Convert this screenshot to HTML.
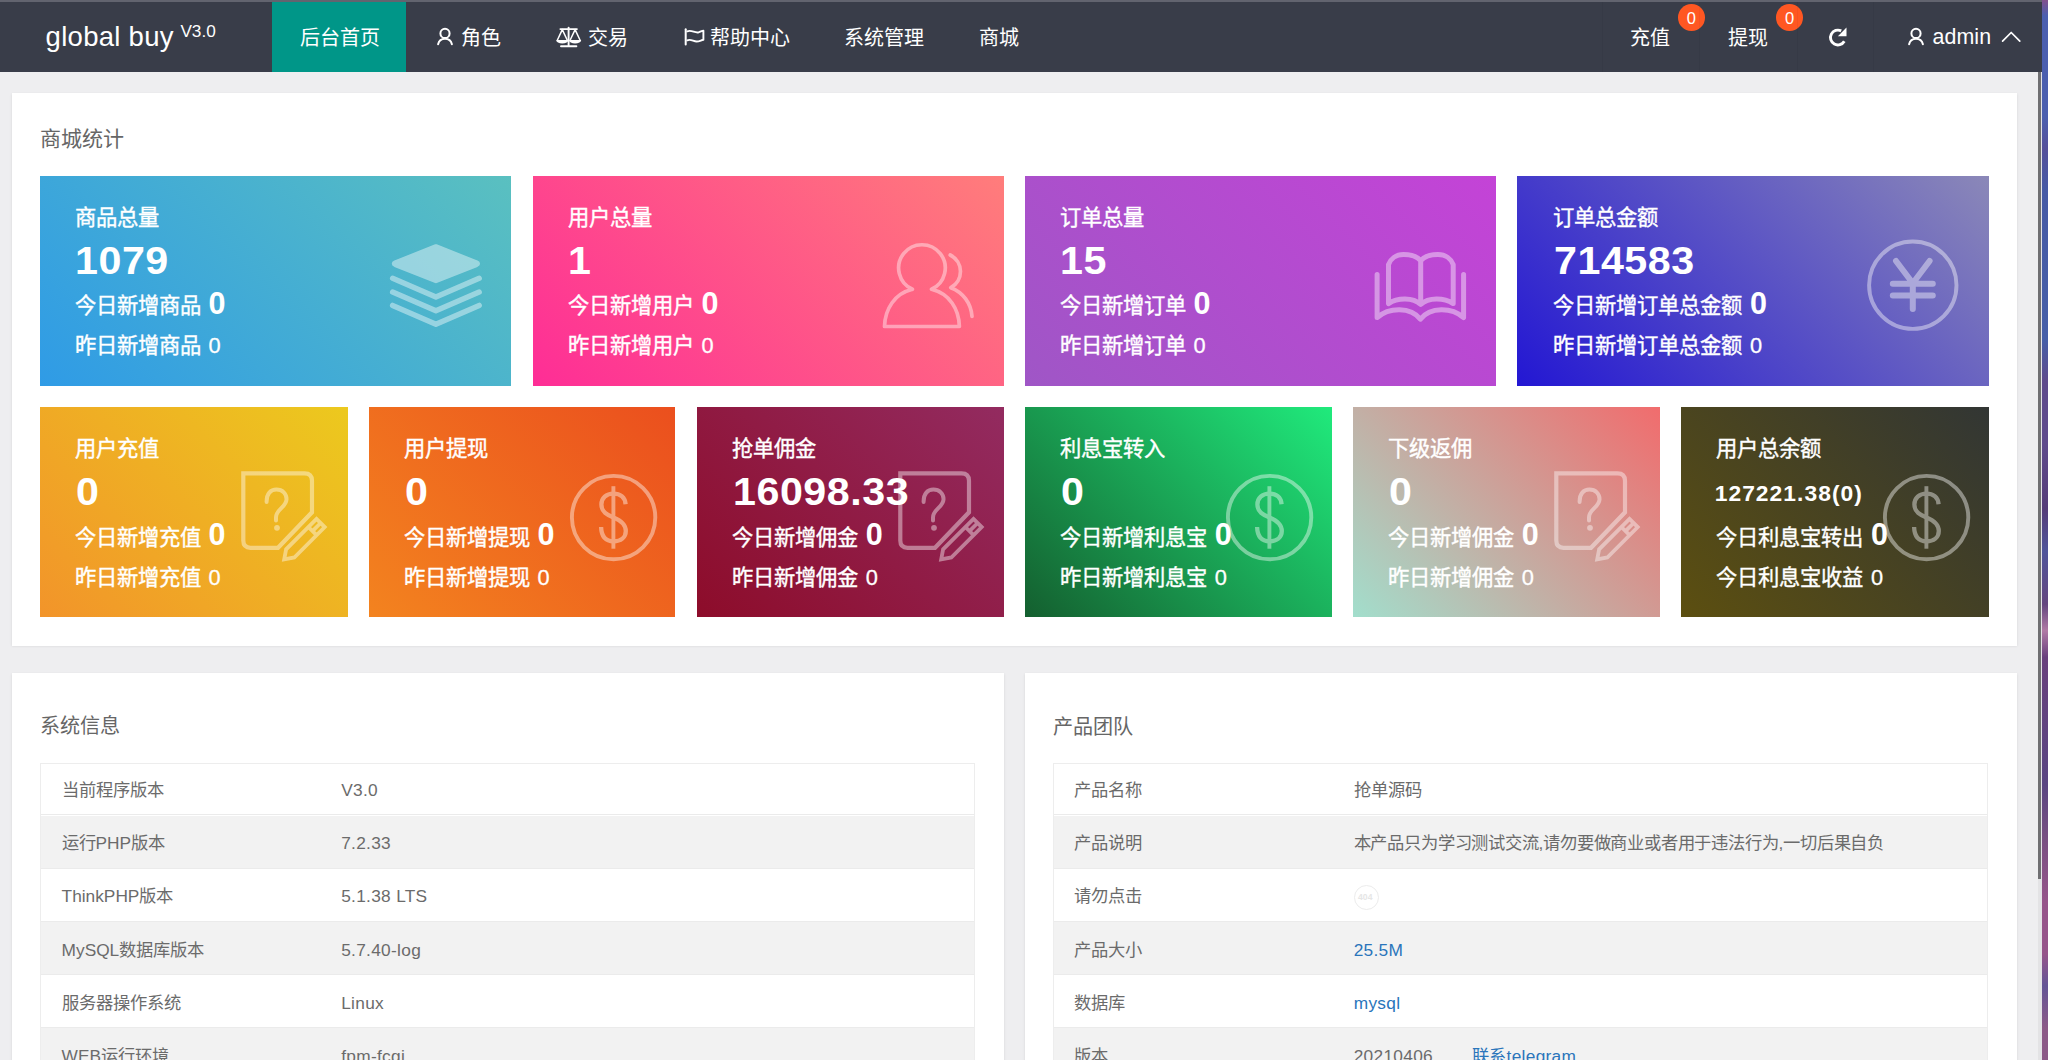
<!DOCTYPE html>
<html lang="zh-CN"><head><meta charset="utf-8"><title>global buy</title>
<style>
*{margin:0;padding:0;box-sizing:border-box}
html,body{width:2048px;height:1060px;overflow:hidden}
body{position:relative;background:#eeeef0;font-family:"Liberation Sans",sans-serif;color:#666}
.t{position:absolute;white-space:nowrap}
.ic{position:absolute;overflow:visible}
.abs{position:absolute}
.panel{position:absolute;background:#fff;box-shadow:0 1.3px 2.7px rgba(0,0,0,.1)}
.card{position:absolute}
.row{position:absolute;left:0;right:0;height:53px;border-bottom:1px solid #ebebeb}
.tbl{position:absolute;border:1px solid #ededed;background:#fff;overflow:hidden}
.ev{background:#f2f2f2}
b{font-weight:700}
</style></head><body>
<div class="abs" style="left:2041px;top:0;width:7px;height:1060px;background:linear-gradient(180deg,#82508c 0,#4b5faf 1.5%,#4b5faf 11%,#55509a 14%,#465aa5 18%,#465fa8 32%,#5f4b8c 36%,#5f4b8c 42%,#553c78 48%,#50559a 52%,#64467f 57%,#b07aa5 59.5%,#69417d 62%,#5a4682 74%,#785082 79%,#96558a 85%,#96558a 90%,#645596 93%,#8c5a87 97%,#8c5a87 100%)"></div>
<div class="abs" style="left:2038px;top:72px;width:3.5px;height:988px;background:#e3e3e5"></div>
<div class="abs" style="left:2037.6px;top:72px;width:3.6px;height:806.8px;background:#6f6f72"></div>
<div class="abs" style="left:0;top:0;width:2041.5px;height:72px;background:#393d49"></div>
<div class="abs" style="left:0;top:0;width:2041.5px;height:2px;background:#62646f"></div>
<div class="abs" style="left:272px;top:2px;width:134px;height:70px;background:#009688"></div>
<div class="t" style="left:45.6px;top:17.0px;font-size:27.5px;line-height:40px;color:#fff;font-weight:400;letter-spacing:.28px">global buy</div>
<div class="t" style="left:180.4px;top:19.0px;font-size:17.2px;line-height:24px;color:#fff;font-weight:400;">V3.0</div>
<div class="t" style="left:299.6px;top:23.0px;font-size:20px;line-height:30px;color:#fff;font-weight:400;">后台首页</div>
<div class="t" style="left:461px;top:23.0px;font-size:20px;line-height:30px;color:#fff;font-weight:400;">角色</div>
<div class="t" style="left:588px;top:23.0px;font-size:20px;line-height:30px;color:#fff;font-weight:400;">交易</div>
<div class="t" style="left:710px;top:23.0px;font-size:20px;line-height:30px;color:#fff;font-weight:400;">帮助中心</div>
<div class="t" style="left:844px;top:23.0px;font-size:20px;line-height:30px;color:#fff;font-weight:400;">系统管理</div>
<div class="t" style="left:979.2px;top:23.0px;font-size:20px;line-height:30px;color:#fff;font-weight:400;">商城</div>
<div class="t" style="left:1630px;top:23.0px;font-size:20px;line-height:30px;color:#fff;font-weight:400;">充值</div>
<div class="t" style="left:1728px;top:23.0px;font-size:20px;line-height:30px;color:#fff;font-weight:400;">提现</div>
<div class="t" style="left:1932.4px;top:21.6px;font-size:21.4px;line-height:30px;color:#fff;font-weight:400;letter-spacing:.1px">admin</div>
<div class="abs" style="left:1678.1px;top:4.2px;width:26.6px;height:26.6px;border-radius:50%;background:#ff5722"></div>
<div class="t" style="left:1686.8000000000002px;top:7.6px;font-size:16.5px;line-height:20px;color:#fff;font-weight:400;">0</div>
<div class="abs" style="left:1776.4px;top:4.2px;width:26.6px;height:26.6px;border-radius:50%;background:#ff5722"></div>
<div class="t" style="left:1785.1000000000001px;top:7.6px;font-size:16.5px;line-height:20px;color:#fff;font-weight:400;">0</div>
<div class="abs" style="left:1601.5px;top:2px;width:1px;height:70px;background:rgba(0,0,0,.035)"></div>
<div class="abs" style="left:1698.5px;top:2px;width:1px;height:70px;background:rgba(0,0,0,.035)"></div>
<div class="abs" style="left:1797px;top:2px;width:1px;height:70px;background:rgba(0,0,0,.035)"></div>
<div class="abs" style="left:1872.5px;top:2px;width:1px;height:70px;background:rgba(0,0,0,.035)"></div>
<svg class="ic" style="left:432.7px;top:24px" width="24" height="26" viewBox="432.7 24 24 26"><circle cx="444.7" cy="33.4" r="4.6" stroke="#fff" fill="none" stroke-linecap="round" stroke-linejoin="round" stroke-width="2"/><path d="M437.8 44.2 A7.1 7.1 0 0 1 451.59999999999997 44.2" stroke="#fff" fill="none" stroke-linecap="round" stroke-linejoin="round" stroke-width="2"/></svg>
<svg class="ic" style="left:1903.8px;top:24px" width="24" height="26" viewBox="1903.8 24 24 26"><circle cx="1915.8" cy="33.4" r="4.6" stroke="#fff" fill="none" stroke-linecap="round" stroke-linejoin="round" stroke-width="2"/><path d="M1908.8999999999999 44.2 A7.1 7.1 0 0 1 1922.7 44.2" stroke="#fff" fill="none" stroke-linecap="round" stroke-linejoin="round" stroke-width="2"/></svg>
<svg class="ic" style="left:552px;top:22px" width="34" height="30" viewBox="552 22 34 30"><path d="M560.4 29.1 H576.9 M568.6 27.6 V46.2 M561 46.3 H576.4" stroke="#fff" fill="none" stroke-linecap="round" stroke-linejoin="round" stroke-width="1.9"/><path d="M562.3 29.6 L557.4 40 M562.3 29.6 L567.2 40 M575.1 29.6 L570.2 40 M575.1 29.6 L580 40" stroke="#fff" fill="none" stroke-linecap="round" stroke-linejoin="round" stroke-width="1.5"/><path d="M556.2 40 H568.4 A6.1 3.6 0 0 1 556.2 40 Z M569 40 H581.2 A6.1 3.6 0 0 1 569 40 Z" fill="#fff"/></svg>
<svg class="ic" style="left:680px;top:22px" width="30" height="30" viewBox="680 22 30 30"><path d="M685.7 29.2 V44.6" stroke="#fff" fill="none" stroke-linecap="round" stroke-linejoin="round" stroke-width="2"/><path d="M687.3 31.3 C691.5 29.6 695 33.3 698.6 32.3 C700.6 31.7 702 30.8 703.4 30.6 V39.7 C701 40.1 699.6 41.5 696.6 41.5 C693.4 41.5 690.8 38.7 687.3 40.3" stroke="#fff" fill="none" stroke-linecap="round" stroke-linejoin="round" stroke-width="1.9"/></svg>
<svg class="ic" style="left:1822px;top:22px" width="30" height="30" viewBox="1822 22 30 30"><path d="M1844.3 41.2 A7.4 7.4 0 1 1 1841.2 30.9" stroke="#fff" fill="none" stroke-width="2.9"/><path d="M1846.5 27.6 V36.2 H1837.9 Z" fill="#fff"/></svg>
<svg class="ic" style="left:1998px;top:26px" width="26" height="22" viewBox="1998 26 26 22"><path d="M2002.6 41.2 L2011.2 32.5 L2019.8 41.2" stroke="#fff" fill="none" stroke-linecap="round" stroke-linejoin="round" stroke-width="1.7"/></svg>
<div class="panel" style="left:12px;top:93px;width:2005px;height:552.5px"></div>
<div class="t" style="left:40px;top:124.3px;font-size:21px;line-height:30px;color:#666;font-weight:400;">商城统计</div>
<div class="card" style="left:40.00px;top:175.5px;width:471px;height:210.3px;background:linear-gradient(45deg,#2f9be6,#5ac0c0)"></div>
<div class="t" style="left:75.2px;top:202.7px;font-size:21.3px;line-height:30px;color:#fff;font-weight:400;-webkit-text-stroke:.38px #fff">商品总量</div>
<div class="t" style="left:75.4px;top:237.7px;font-size:38.5px;line-height:46px;color:#fff;font-weight:700;letter-spacing:.5px;transform:scaleX(1.07);transform-origin:0 50%">1079</div>
<div class="t" style="left:75.2px;top:291.4px;font-size:21.3px;line-height:30px;color:#fff;font-weight:400;-webkit-text-stroke:.38px #fff">今日新增商品</div>
<div class="t" style="left:208.6px;top:284.7px;font-size:30.5px;line-height:36px;color:#fff;font-weight:700;">0</div>
<div class="t" style="left:75.2px;top:330.8px;font-size:21.3px;line-height:30px;color:#fff;font-weight:400;-webkit-text-stroke:.38px #fff">昨日新增商品</div>
<div class="t" style="left:208.6px;top:330.8px;font-size:21.8px;line-height:30px;color:#fff;font-weight:400;-webkit-text-stroke:.3px #fff">0</div>
<div class="card" style="left:532.90px;top:175.5px;width:471.0px;height:210.3px;background:linear-gradient(45deg,#fe2d96,#ff7d7b)"></div>
<div class="t" style="left:568.1px;top:202.7px;font-size:21.3px;line-height:30px;color:#fff;font-weight:400;-webkit-text-stroke:.38px #fff">用户总量</div>
<div class="t" style="left:568.3000000000001px;top:237.7px;font-size:38.5px;line-height:46px;color:#fff;font-weight:700;letter-spacing:.5px;transform:scaleX(1.07);transform-origin:0 50%">1</div>
<div class="t" style="left:568.1px;top:291.4px;font-size:21.3px;line-height:30px;color:#fff;font-weight:400;-webkit-text-stroke:.38px #fff">今日新增用户</div>
<div class="t" style="left:701.5000000000001px;top:284.7px;font-size:30.5px;line-height:36px;color:#fff;font-weight:700;">0</div>
<div class="t" style="left:568.1px;top:330.8px;font-size:21.3px;line-height:30px;color:#fff;font-weight:400;-webkit-text-stroke:.38px #fff">昨日新增用户</div>
<div class="t" style="left:701.5000000000001px;top:330.8px;font-size:21.8px;line-height:30px;color:#fff;font-weight:400;-webkit-text-stroke:.3px #fff">0</div>
<div class="card" style="left:1024.80px;top:175.5px;width:471.0px;height:210.3px;background:linear-gradient(45deg,#9f56c6,#c443d7)"></div>
<div class="t" style="left:1060.0px;top:202.7px;font-size:21.3px;line-height:30px;color:#fff;font-weight:400;-webkit-text-stroke:.38px #fff">订单总量</div>
<div class="t" style="left:1060.2px;top:237.7px;font-size:38.5px;line-height:46px;color:#fff;font-weight:700;letter-spacing:.5px;transform:scaleX(1.07);transform-origin:0 50%">15</div>
<div class="t" style="left:1060.0px;top:291.4px;font-size:21.3px;line-height:30px;color:#fff;font-weight:400;-webkit-text-stroke:.38px #fff">今日新增订单</div>
<div class="t" style="left:1193.3999999999999px;top:284.7px;font-size:30.5px;line-height:36px;color:#fff;font-weight:700;">0</div>
<div class="t" style="left:1060.0px;top:330.8px;font-size:21.3px;line-height:30px;color:#fff;font-weight:400;-webkit-text-stroke:.38px #fff">昨日新增订单</div>
<div class="t" style="left:1193.3999999999999px;top:330.8px;font-size:21.8px;line-height:30px;color:#fff;font-weight:400;-webkit-text-stroke:.3px #fff">0</div>
<div class="card" style="left:1517.40px;top:175.5px;width:471.2px;height:210.3px;background:linear-gradient(45deg,#2317d3,#8b88b8)"></div>
<div class="t" style="left:1552.6000000000001px;top:202.7px;font-size:21.3px;line-height:30px;color:#fff;font-weight:400;-webkit-text-stroke:.38px #fff">订单总金额</div>
<div class="t" style="left:1553.6000000000001px;top:237.7px;font-size:38.5px;line-height:46px;color:#fff;font-weight:700;letter-spacing:.5px;transform:scaleX(1.07);transform-origin:0 50%">714583</div>
<div class="t" style="left:1552.6000000000001px;top:291.4px;font-size:21.3px;line-height:30px;color:#fff;font-weight:400;-webkit-text-stroke:.38px #fff">今日新增订单总金额</div>
<div class="t" style="left:1749.9px;top:284.7px;font-size:30.5px;line-height:36px;color:#fff;font-weight:700;">0</div>
<div class="t" style="left:1552.6000000000001px;top:330.8px;font-size:21.3px;line-height:30px;color:#fff;font-weight:400;-webkit-text-stroke:.38px #fff">昨日新增订单总金额</div>
<div class="t" style="left:1749.9px;top:330.8px;font-size:21.8px;line-height:30px;color:#fff;font-weight:400;-webkit-text-stroke:.3px #fff">0</div>
<svg class="ic" style="left:384px;top:238px;opacity:0.42;" width="104" height="94" viewBox="384 238 104 94"><path d="M435.9 246.4 L476.6 262.6 Q479 263.7 476.6 264.8 L435.9 281 L395.2 264.8 Q392.8 263.7 395.2 262.6 Z" fill="#fff" stroke="#fff" stroke-width="4.5" stroke-linejoin="round"/><path d="M392.6 278.3 L435.9 297 L479.2 278.3 M392.6 292.1 L435.9 310.8 L479.2 292.1 M392.6 305.4 L435.9 324.2 L479.2 305.4" stroke="#fff" fill="none" stroke-linecap="round" stroke-linejoin="round" stroke-width="5.4"/></svg>
<svg class="ic" style="left:876px;top:236px;opacity:0.42;" width="102" height="98" viewBox="876 236 102 98"><path d="M912.4 289.3 A23.3 23.3 0 1 1 931.5 289.3 C949.5 293.6 959 309 959.4 326.5 H884.5 C885 309 894.5 293.6 912.4 289.3" stroke="#fff" fill="none" stroke-linecap="round" stroke-linejoin="round" stroke-width="3.7"/><path d="M950.2 255 A18.4 18.4 0 0 1 950.8 287.7 C963 292.2 971.2 303.5 972 316.4" stroke="#fff" fill="none" stroke-linecap="round" stroke-linejoin="round" stroke-width="3.7"/></svg>
<svg class="ic" style="left:1368px;top:246px;opacity:0.42;" width="104" height="82" viewBox="1368 246 104 82"><path d="M1377.1 274.5 V317.6 C1389 307.2 1410.5 306.6 1420.4 319.2 C1430.3 306.6 1451.8 307.2 1463.6 317.6 V274.5" stroke="#fff" fill="none" stroke-linecap="round" stroke-linejoin="round" stroke-width="5"/><path d="M1388.5 303.6 V264.6 C1390.5 259 1396 254.6 1403.5 254.6 C1411.5 254.6 1417 256.4 1420.7 260.6 C1424.4 256.4 1430 254.6 1438 254.6 C1445.6 254.6 1451.2 259 1453.2 264.6 V303.6 C1444 297.6 1428.5 297.3 1420.7 304.4 C1413 297.3 1397.5 297.6 1388.5 303.6 Z M1420.7 260.6 V304" stroke="#fff" fill="none" stroke-linecap="round" stroke-linejoin="round" stroke-width="5"/></svg>
<svg class="ic" style="left:1864px;top:236px;opacity:0.42;" width="98" height="98" viewBox="1864 236 98 98"><circle cx="1912.8" cy="285.2" r="43.7" stroke="#fff" fill="none" stroke-linecap="round" stroke-linejoin="round" stroke-width="3.9"/><path d="M1896 261 L1912.8 283.2 L1929.6 261 M1892.8 283.8 H1932.8 M1892.8 295.4 H1932.8 M1912.8 283.2 V309" stroke="#fff" fill="none" stroke-linecap="round" stroke-linejoin="round" stroke-width="6"/></svg>
<div class="card" style="left:40.00px;top:407.2px;width:307.8px;height:209.6px;background:linear-gradient(45deg,#f2942a,#ecc91e)"></div>
<div class="t" style="left:75.2px;top:434.4px;font-size:21.3px;line-height:30px;color:#fff;font-weight:400;-webkit-text-stroke:.38px #fff">用户充值</div>
<div class="t" style="left:76.2px;top:469.4px;font-size:38.5px;line-height:46px;color:#fff;font-weight:700;letter-spacing:.5px;transform:scaleX(1.07);transform-origin:0 50%">0</div>
<div class="t" style="left:75.2px;top:523.1px;font-size:21.3px;line-height:30px;color:#fff;font-weight:400;-webkit-text-stroke:.38px #fff">今日新增充值</div>
<div class="t" style="left:208.6px;top:516.4px;font-size:30.5px;line-height:36px;color:#fff;font-weight:700;">0</div>
<div class="t" style="left:75.2px;top:562.5px;font-size:21.3px;line-height:30px;color:#fff;font-weight:400;-webkit-text-stroke:.38px #fff">昨日新增充值</div>
<div class="t" style="left:208.6px;top:562.5px;font-size:21.8px;line-height:30px;color:#fff;font-weight:400;-webkit-text-stroke:.3px #fff">0</div>
<svg class="ic" style="left:238.00px;top:468.00px;opacity:0.42;" width="94" height="96" viewBox="238 468 94 96"><path d="M243.3 473.3 H304.5 Q312 473.3 312 480.8 V512.3 L278 547.8 H250.5 Q243.3 547.8 243.3 540.6 Z" stroke="#fff" fill="none" stroke-linecap="round" stroke-linejoin="miter" stroke-width="4.2"/><path d="M266.6 502 C266.4 493.5 270.8 489.6 276.4 489.6 C282.3 489.6 286.8 493.6 286.5 499.6 C286 507.3 276 509.3 276 517.4 V520.4" stroke="#fff" fill="none" stroke-linecap="round" stroke-linejoin="round" stroke-width="4"/><circle cx="277" cy="527.8" r="2.9" fill="#fff"/><g transform="translate(284.2 559.4) rotate(-45)"><path d="M0 0 L8.5 -5.8 H51.5 V5.8 H8.5 Z M40 -5.8 V5.8 M40 0 H51.5" stroke="#fff" fill="none" stroke-linecap="round" stroke-linejoin="miter" stroke-width="3.8"/></g></svg>
<div class="card" style="left:368.80px;top:407.2px;width:306.6px;height:209.6px;background:linear-gradient(45deg,#f3831f,#eb4f1e)"></div>
<div class="t" style="left:404.0px;top:434.4px;font-size:21.3px;line-height:30px;color:#fff;font-weight:400;-webkit-text-stroke:.38px #fff">用户提现</div>
<div class="t" style="left:405.0px;top:469.4px;font-size:38.5px;line-height:46px;color:#fff;font-weight:700;letter-spacing:.5px;transform:scaleX(1.07);transform-origin:0 50%">0</div>
<div class="t" style="left:404.0px;top:523.1px;font-size:21.3px;line-height:30px;color:#fff;font-weight:400;-webkit-text-stroke:.38px #fff">今日新增提现</div>
<div class="t" style="left:537.4px;top:516.4px;font-size:30.5px;line-height:36px;color:#fff;font-weight:700;">0</div>
<div class="t" style="left:404.0px;top:562.5px;font-size:21.3px;line-height:30px;color:#fff;font-weight:400;-webkit-text-stroke:.38px #fff">昨日新增提现</div>
<div class="t" style="left:537.4px;top:562.5px;font-size:21.8px;line-height:30px;color:#fff;font-weight:400;-webkit-text-stroke:.3px #fff">0</div>
<svg class="ic" style="left:566.40px;top:470.00px;opacity:0.42;" width="96" height="96" viewBox="566 470 96 96"><circle cx="613.6" cy="517.6" r="41.7" stroke="#fff" fill="none" stroke-linecap="round" stroke-linejoin="round" stroke-width="3.9"/><path d="M613.4 486.2 V548.7" stroke="#fff" fill="none" stroke-linecap="butt" stroke-linejoin="round" stroke-width="3.9"/><path d="M625.6 504.2 C625 497.2 620 493.6 613.5 493.6 C606.2 493.6 601.4 498 601.4 504.4 C601.4 512 607.3 515 613.5 517.4 C620 520 625.8 523.6 625.8 531 C625.8 537.6 620.6 541.3 613.5 541.3 C606.3 541.3 601.4 537 601.1 527" stroke="#fff" fill="none" stroke-linecap="butt" stroke-linejoin="round" stroke-width="4.3"/></svg>
<div class="card" style="left:697.10px;top:407.2px;width:306.7px;height:209.6px;background:linear-gradient(45deg,#8d0c2a,#932b60)"></div>
<div class="t" style="left:732.3000000000001px;top:434.4px;font-size:21.3px;line-height:30px;color:#fff;font-weight:400;-webkit-text-stroke:.38px #fff">抢单佣金</div>
<div class="t" style="left:732.5000000000001px;top:469.4px;font-size:38.5px;line-height:46px;color:#fff;font-weight:700;letter-spacing:.5px;transform:scaleX(1.07);transform-origin:0 50%">16098.33</div>
<div class="t" style="left:732.3000000000001px;top:523.1px;font-size:21.3px;line-height:30px;color:#fff;font-weight:400;-webkit-text-stroke:.38px #fff">今日新增佣金</div>
<div class="t" style="left:865.7000000000002px;top:516.4px;font-size:30.5px;line-height:36px;color:#fff;font-weight:700;">0</div>
<div class="t" style="left:732.3000000000001px;top:562.5px;font-size:21.3px;line-height:30px;color:#fff;font-weight:400;-webkit-text-stroke:.38px #fff">昨日新增佣金</div>
<div class="t" style="left:865.7000000000002px;top:562.5px;font-size:21.8px;line-height:30px;color:#fff;font-weight:400;-webkit-text-stroke:.3px #fff">0</div>
<svg class="ic" style="left:895.10px;top:468.00px;opacity:0.42;" width="94" height="96" viewBox="238 468 94 96"><path d="M243.3 473.3 H304.5 Q312 473.3 312 480.8 V512.3 L278 547.8 H250.5 Q243.3 547.8 243.3 540.6 Z" stroke="#fff" fill="none" stroke-linecap="round" stroke-linejoin="miter" stroke-width="4.2"/><path d="M266.6 502 C266.4 493.5 270.8 489.6 276.4 489.6 C282.3 489.6 286.8 493.6 286.5 499.6 C286 507.3 276 509.3 276 517.4 V520.4" stroke="#fff" fill="none" stroke-linecap="round" stroke-linejoin="round" stroke-width="4"/><circle cx="277" cy="527.8" r="2.9" fill="#fff"/><g transform="translate(284.2 559.4) rotate(-45)"><path d="M0 0 L8.5 -5.8 H51.5 V5.8 H8.5 Z M40 -5.8 V5.8 M40 0 H51.5" stroke="#fff" fill="none" stroke-linecap="round" stroke-linejoin="miter" stroke-width="3.8"/></g></svg>
<div class="card" style="left:1024.80px;top:407.2px;width:307.5px;height:209.6px;background:linear-gradient(45deg,#145f2f,#20ea7c)"></div>
<div class="t" style="left:1060.0px;top:434.4px;font-size:21.3px;line-height:30px;color:#fff;font-weight:400;-webkit-text-stroke:.38px #fff">利息宝转入</div>
<div class="t" style="left:1061.0px;top:469.4px;font-size:38.5px;line-height:46px;color:#fff;font-weight:700;letter-spacing:.5px;transform:scaleX(1.07);transform-origin:0 50%">0</div>
<div class="t" style="left:1060.0px;top:523.1px;font-size:21.3px;line-height:30px;color:#fff;font-weight:400;-webkit-text-stroke:.38px #fff">今日新增利息宝</div>
<div class="t" style="left:1214.6999999999998px;top:516.4px;font-size:30.5px;line-height:36px;color:#fff;font-weight:700;">0</div>
<div class="t" style="left:1060.0px;top:562.5px;font-size:21.3px;line-height:30px;color:#fff;font-weight:400;-webkit-text-stroke:.38px #fff">昨日新增利息宝</div>
<div class="t" style="left:1214.6999999999998px;top:562.5px;font-size:21.8px;line-height:30px;color:#fff;font-weight:400;-webkit-text-stroke:.3px #fff">0</div>
<svg class="ic" style="left:1222.40px;top:470.00px;opacity:0.42;" width="96" height="96" viewBox="566 470 96 96"><circle cx="613.6" cy="517.6" r="41.7" stroke="#fff" fill="none" stroke-linecap="round" stroke-linejoin="round" stroke-width="3.9"/><path d="M613.4 486.2 V548.7" stroke="#fff" fill="none" stroke-linecap="butt" stroke-linejoin="round" stroke-width="3.9"/><path d="M625.6 504.2 C625 497.2 620 493.6 613.5 493.6 C606.2 493.6 601.4 498 601.4 504.4 C601.4 512 607.3 515 613.5 517.4 C620 520 625.8 523.6 625.8 531 C625.8 537.6 620.6 541.3 613.5 541.3 C606.3 541.3 601.4 537 601.1 527" stroke="#fff" fill="none" stroke-linecap="butt" stroke-linejoin="round" stroke-width="4.3"/></svg>
<div class="card" style="left:1353.20px;top:407.2px;width:307.0px;height:209.6px;background:linear-gradient(45deg,#a2decc,#f16c6d)"></div>
<div class="t" style="left:1388.4px;top:434.4px;font-size:21.3px;line-height:30px;color:#fff;font-weight:400;-webkit-text-stroke:.38px #fff">下级返佣</div>
<div class="t" style="left:1389.4px;top:469.4px;font-size:38.5px;line-height:46px;color:#fff;font-weight:700;letter-spacing:.5px;transform:scaleX(1.07);transform-origin:0 50%">0</div>
<div class="t" style="left:1388.4px;top:523.1px;font-size:21.3px;line-height:30px;color:#fff;font-weight:400;-webkit-text-stroke:.38px #fff">今日新增佣金</div>
<div class="t" style="left:1521.8px;top:516.4px;font-size:30.5px;line-height:36px;color:#fff;font-weight:700;">0</div>
<div class="t" style="left:1388.4px;top:562.5px;font-size:21.3px;line-height:30px;color:#fff;font-weight:400;-webkit-text-stroke:.38px #fff">昨日新增佣金</div>
<div class="t" style="left:1521.8px;top:562.5px;font-size:21.8px;line-height:30px;color:#fff;font-weight:400;-webkit-text-stroke:.3px #fff">0</div>
<svg class="ic" style="left:1551.20px;top:468.00px;opacity:0.42;" width="94" height="96" viewBox="238 468 94 96"><path d="M243.3 473.3 H304.5 Q312 473.3 312 480.8 V512.3 L278 547.8 H250.5 Q243.3 547.8 243.3 540.6 Z" stroke="#fff" fill="none" stroke-linecap="round" stroke-linejoin="miter" stroke-width="4.2"/><path d="M266.6 502 C266.4 493.5 270.8 489.6 276.4 489.6 C282.3 489.6 286.8 493.6 286.5 499.6 C286 507.3 276 509.3 276 517.4 V520.4" stroke="#fff" fill="none" stroke-linecap="round" stroke-linejoin="round" stroke-width="4"/><circle cx="277" cy="527.8" r="2.9" fill="#fff"/><g transform="translate(284.2 559.4) rotate(-45)"><path d="M0 0 L8.5 -5.8 H51.5 V5.8 H8.5 Z M40 -5.8 V5.8 M40 0 H51.5" stroke="#fff" fill="none" stroke-linecap="round" stroke-linejoin="miter" stroke-width="3.8"/></g></svg>
<div class="card" style="left:1681.10px;top:407.2px;width:307.5px;height:209.6px;background:linear-gradient(45deg,#5c4f10,#323634)"></div>
<div class="t" style="left:1716.3px;top:434.4px;font-size:21.3px;line-height:30px;color:#fff;font-weight:400;-webkit-text-stroke:.38px #fff">用户总余额</div>
<div class="t" style="left:1714.7px;top:477.6px;font-size:22.8px;line-height:30px;color:#fff;font-weight:700;letter-spacing:1.05px">127221.38(0)</div>
<div class="t" style="left:1716.3px;top:523.1px;font-size:21.3px;line-height:30px;color:#fff;font-weight:400;-webkit-text-stroke:.38px #fff">今日利息宝转出</div>
<div class="t" style="left:1870.9999999999998px;top:516.4px;font-size:30.5px;line-height:36px;color:#fff;font-weight:700;">0</div>
<div class="t" style="left:1716.3px;top:562.5px;font-size:21.3px;line-height:30px;color:#fff;font-weight:400;-webkit-text-stroke:.38px #fff">今日利息宝收益</div>
<div class="t" style="left:1870.9999999999998px;top:562.5px;font-size:21.8px;line-height:30px;color:#fff;font-weight:400;-webkit-text-stroke:.3px #fff">0</div>
<svg class="ic" style="left:1878.70px;top:470.00px;opacity:0.42;" width="96" height="96" viewBox="566 470 96 96"><circle cx="613.6" cy="517.6" r="41.7" stroke="#fff" fill="none" stroke-linecap="round" stroke-linejoin="round" stroke-width="3.9"/><path d="M613.4 486.2 V548.7" stroke="#fff" fill="none" stroke-linecap="butt" stroke-linejoin="round" stroke-width="3.9"/><path d="M625.6 504.2 C625 497.2 620 493.6 613.5 493.6 C606.2 493.6 601.4 498 601.4 504.4 C601.4 512 607.3 515 613.5 517.4 C620 520 625.8 523.6 625.8 531 C625.8 537.6 620.6 541.3 613.5 541.3 C606.3 541.3 601.4 537 601.1 527" stroke="#fff" fill="none" stroke-linecap="butt" stroke-linejoin="round" stroke-width="4.3"/></svg>
<div class="panel" style="left:12px;top:673px;width:992px;height:400px"></div>
<div class="panel" style="left:1025px;top:673px;width:992px;height:400px"></div>
<div class="t" style="left:39.8px;top:711.4px;font-size:20.1px;line-height:30px;color:#666;font-weight:400;">系统信息</div>
<div class="t" style="left:1052.6px;top:711.8px;font-size:20.1px;line-height:30px;color:#666;font-weight:400;">产品团队</div>
<div class="tbl" style="left:40px;top:763px;width:935px;height:320px">
<div class="row" style="top:-1.6px"></div>
<div class="row ev" style="top:51.5px"></div>
<div class="row" style="top:104.6px"></div>
<div class="row ev" style="top:157.7px"></div>
<div class="row" style="top:210.8px"></div>
<div class="row ev" style="top:263.9px"></div>
</div>
<div class="t" style="left:61.6px;top:777.2px;font-size:17.3px;line-height:26px;color:#6b6b6b;font-weight:400;">当前程序版本</div>
<div class="t" style="left:341.2px;top:777.2px;font-size:17.3px;line-height:26px;color:#6b6b6b;font-weight:400;letter-spacing:.3px">V3.0</div>
<div class="t" style="left:61.6px;top:830.3px;font-size:17.3px;line-height:26px;color:#6b6b6b;font-weight:400;">运行PHP版本</div>
<div class="t" style="left:341.2px;top:830.3px;font-size:17.3px;line-height:26px;color:#6b6b6b;font-weight:400;letter-spacing:.3px">7.2.33</div>
<div class="t" style="left:61.6px;top:883.4px;font-size:17.3px;line-height:26px;color:#6b6b6b;font-weight:400;">ThinkPHP版本</div>
<div class="t" style="left:341.2px;top:883.4px;font-size:17.3px;line-height:26px;color:#6b6b6b;font-weight:400;letter-spacing:.3px">5.1.38 LTS</div>
<div class="t" style="left:61.6px;top:936.5px;font-size:17.3px;line-height:26px;color:#6b6b6b;font-weight:400;">MySQL数据库版本</div>
<div class="t" style="left:341.2px;top:936.5px;font-size:17.3px;line-height:26px;color:#6b6b6b;font-weight:400;letter-spacing:.3px">5.7.40-log</div>
<div class="t" style="left:61.6px;top:989.6px;font-size:17.3px;line-height:26px;color:#6b6b6b;font-weight:400;">服务器操作系统</div>
<div class="t" style="left:341.2px;top:989.6px;font-size:17.3px;line-height:26px;color:#6b6b6b;font-weight:400;letter-spacing:.3px">Linux</div>
<div class="t" style="left:61.6px;top:1042.7px;font-size:17.3px;line-height:26px;color:#6b6b6b;font-weight:400;">WEB运行环境</div>
<div class="t" style="left:341.2px;top:1042.7px;font-size:17.3px;line-height:26px;color:#6b6b6b;font-weight:400;letter-spacing:.3px">fpm-fcgi</div>
<div class="tbl" style="left:1052.5px;top:763px;width:935.5px;height:320px">
<div class="row" style="top:-1.6px"></div>
<div class="row ev" style="top:51.5px"></div>
<div class="row" style="top:104.6px"></div>
<div class="row ev" style="top:157.7px"></div>
<div class="row" style="top:210.8px"></div>
<div class="row ev" style="top:263.9px"></div>
</div>
<div class="t" style="left:1074.1px;top:777.2px;font-size:17.3px;line-height:26px;color:#6b6b6b;font-weight:400;">产品名称</div>
<div class="t" style="left:1353.7px;top:777.2px;font-size:17.3px;line-height:26px;color:#6b6b6b;font-weight:400;">抢单源码</div>
<div class="t" style="left:1074.1px;top:830.3px;font-size:17.3px;line-height:26px;color:#6b6b6b;font-weight:400;">产品说明</div>
<div class="t" style="left:1353.7px;top:830.3px;font-size:17.3px;line-height:26px;color:#6b6b6b;font-weight:400;letter-spacing:-.19px">本产品只为学习测试交流,请勿要做商业或者用于违法行为,一切后果自负</div>
<div class="t" style="left:1074.1px;top:883.4px;font-size:17.3px;line-height:26px;color:#6b6b6b;font-weight:400;">请勿点击</div>
<div class="abs" style="left:1353.7px;top:884.6px;width:25px;height:25px;border-radius:50%;border:1.6px solid #ececec"></div>
<div class="t" style="left:1358.1px;top:891.3px;font-size:8.6px;line-height:12px;color:#e6e6e6;font-weight:700;">404</div>
<div class="t" style="left:1074.1px;top:936.5px;font-size:17.3px;line-height:26px;color:#6b6b6b;font-weight:400;">产品大小</div>
<div class="t" style="left:1353.7px;top:936.5px;font-size:17.3px;line-height:26px;color:#6b6b6b;font-weight:400;letter-spacing:.3px"><span style="color:#2a75bb">25.5M</span></div>
<div class="t" style="left:1074.1px;top:989.6px;font-size:17.3px;line-height:26px;color:#6b6b6b;font-weight:400;">数据库</div>
<div class="t" style="left:1353.7px;top:989.6px;font-size:17.3px;line-height:26px;color:#6b6b6b;font-weight:400;letter-spacing:.3px"><span style="color:#2a75bb">mysql</span></div>
<div class="t" style="left:1074.1px;top:1042.7px;font-size:17.3px;line-height:26px;color:#6b6b6b;font-weight:400;">版本</div>
<div class="t" style="left:1353.7px;top:1042.7px;font-size:17.3px;line-height:26px;color:#6b6b6b;font-weight:400;letter-spacing:.3px">20210406<span style="color:#2a75bb;margin-left:39px">联系telegram</span></div>
</body></html>
